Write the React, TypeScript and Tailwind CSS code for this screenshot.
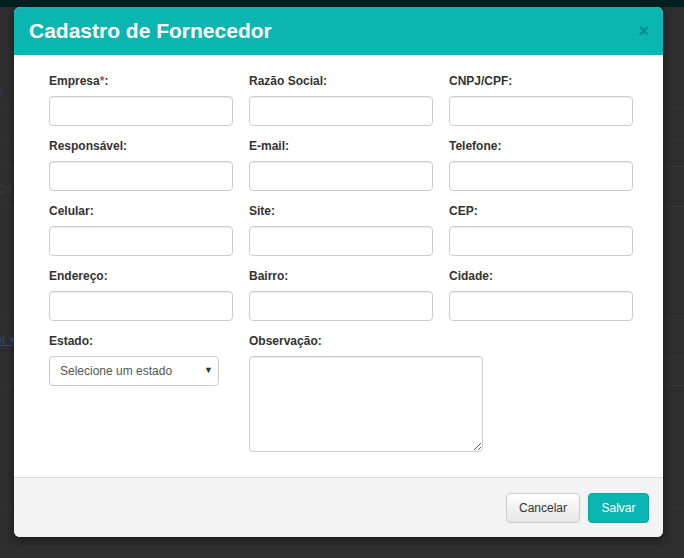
const fields = [
  { label: "Empresa", required: true },
  { label: "Razão Social" },
  { label: "CNPJ/CPF" },
  { label: "Responsável" },
  { label: "E-mail" },
  { label: "Telefone" },
  { label: "Celular" },
  { label: "Site" },
  { label: "CEP" },
  { label: "Endereço" },
  { label: "Bairro" },
  { label: "Cidade" },
];

const bgRows = [
  { h: "h-[101px]", text: "s", cls: "text-[#2a4a7a]" },
  { h: "h-[32px]" },
  { h: "h-[27px]" },
  { h: "h-[40px]", text: "Co", cls: "text-[#3c3c3c]" },
  { h: "h-[113px]" },
  { h: "h-[38px]", text: "el ▾", cls: "text-[#2a4a7a] underline" },
  { h: "h-[28px]" },
  { h: "h-[122px]" },
];

function App() {
  return (
    <div
      className="relative h-[558px] w-[684px] overflow-hidden bg-[#2e2e2e]"
      style={{ fontFamily: '"Liberation Sans", Arial, sans-serif' }}
    >
      {/* page behind the backdrop */}
      <div className="h-[7px] bg-[#01201f]" />
      {bgRows.map((row, i) => (
        <div
          key={i}
          className={`${row.h} flex items-end border-b border-[#333] pb-[8px] text-[13px]`}
        >
          {row.text && <span className={`-ml-[5px] ${row.cls}`}>{row.text}</span>}
        </div>
      ))}

      {/* modal */}
      <div className="absolute left-[14px] top-[7px] flex h-[530px] w-[649px] flex-col overflow-hidden rounded-[6px] bg-white shadow-[0_3px_9px_rgba(0,0,0,0.5)]">
        <div className="flex h-[48px] items-center justify-between bg-[#0bb5b1] pl-[15px] pr-[14px]">
          <h4 className="text-[21px] font-bold text-white">Cadastro de Fornecedor</h4>
          <span className="text-[18px] font-bold leading-none text-[#0a8f8c]">×</span>
        </div>

        <div className="flex-1 pl-[35px] pr-[30px] pt-[17px]">
          <div className="grid grid-cols-3 gap-x-[16px] gap-y-[11px]">
            {fields.map((f) => (
              <div key={f.label}>
                <label className="block h-[24px] text-[12px] font-bold text-[#333]">
                  {f.label}
                  {f.required && <span className="text-[#b94a48]">*</span>}:
                </label>
                <input
                  type="text"
                  className="h-[30px] w-full rounded-[4px] border border-[#ccc] bg-white px-[10px] text-[12px] shadow-[inset_0_1px_1px_rgba(0,0,0,0.075)]"
                />
              </div>
            ))}
            <div>
              <label className="block h-[24px] text-[12px] font-bold text-[#333]">Estado:</label>
              <div className="flex h-[30px] w-[170px] items-center justify-between rounded-[4px] border border-[#ccc] bg-white pl-[10px] pr-[5px] text-[12px] text-[#555]">
                <span>Selecione um estado</span>
                <span className="text-[9px] text-[#333]">▼</span>
              </div>
            </div>
            <div className="col-span-2">
              <label className="block h-[24px] text-[12px] font-bold text-[#333]">Observação:</label>
              <textarea className="block h-[96px] w-[234px] rounded-[4px] border border-[#ccc] bg-white px-[10px] text-[12px] shadow-[inset_0_1px_1px_rgba(0,0,0,0.075)]" />
            </div>
          </div>
        </div>

        <div className="flex h-[60px] items-center justify-end gap-[8px] border-t border-[#ddd] bg-[#f3f3f3] pr-[14px]">
          <button className="h-[30px] w-[74px] rounded-[4px] border border-[#ccc] bg-gradient-to-b from-white to-[#e6e6e6] text-[12px] text-[#333]">
            Cancelar
          </button>
          <button className="h-[30px] w-[61px] rounded-[4px] border border-[#0aa5a1] bg-[#0bb5b1] text-[12px] text-white">
            Salvar
          </button>
        </div>
      </div>
    </div>
  );
}

export default App;
